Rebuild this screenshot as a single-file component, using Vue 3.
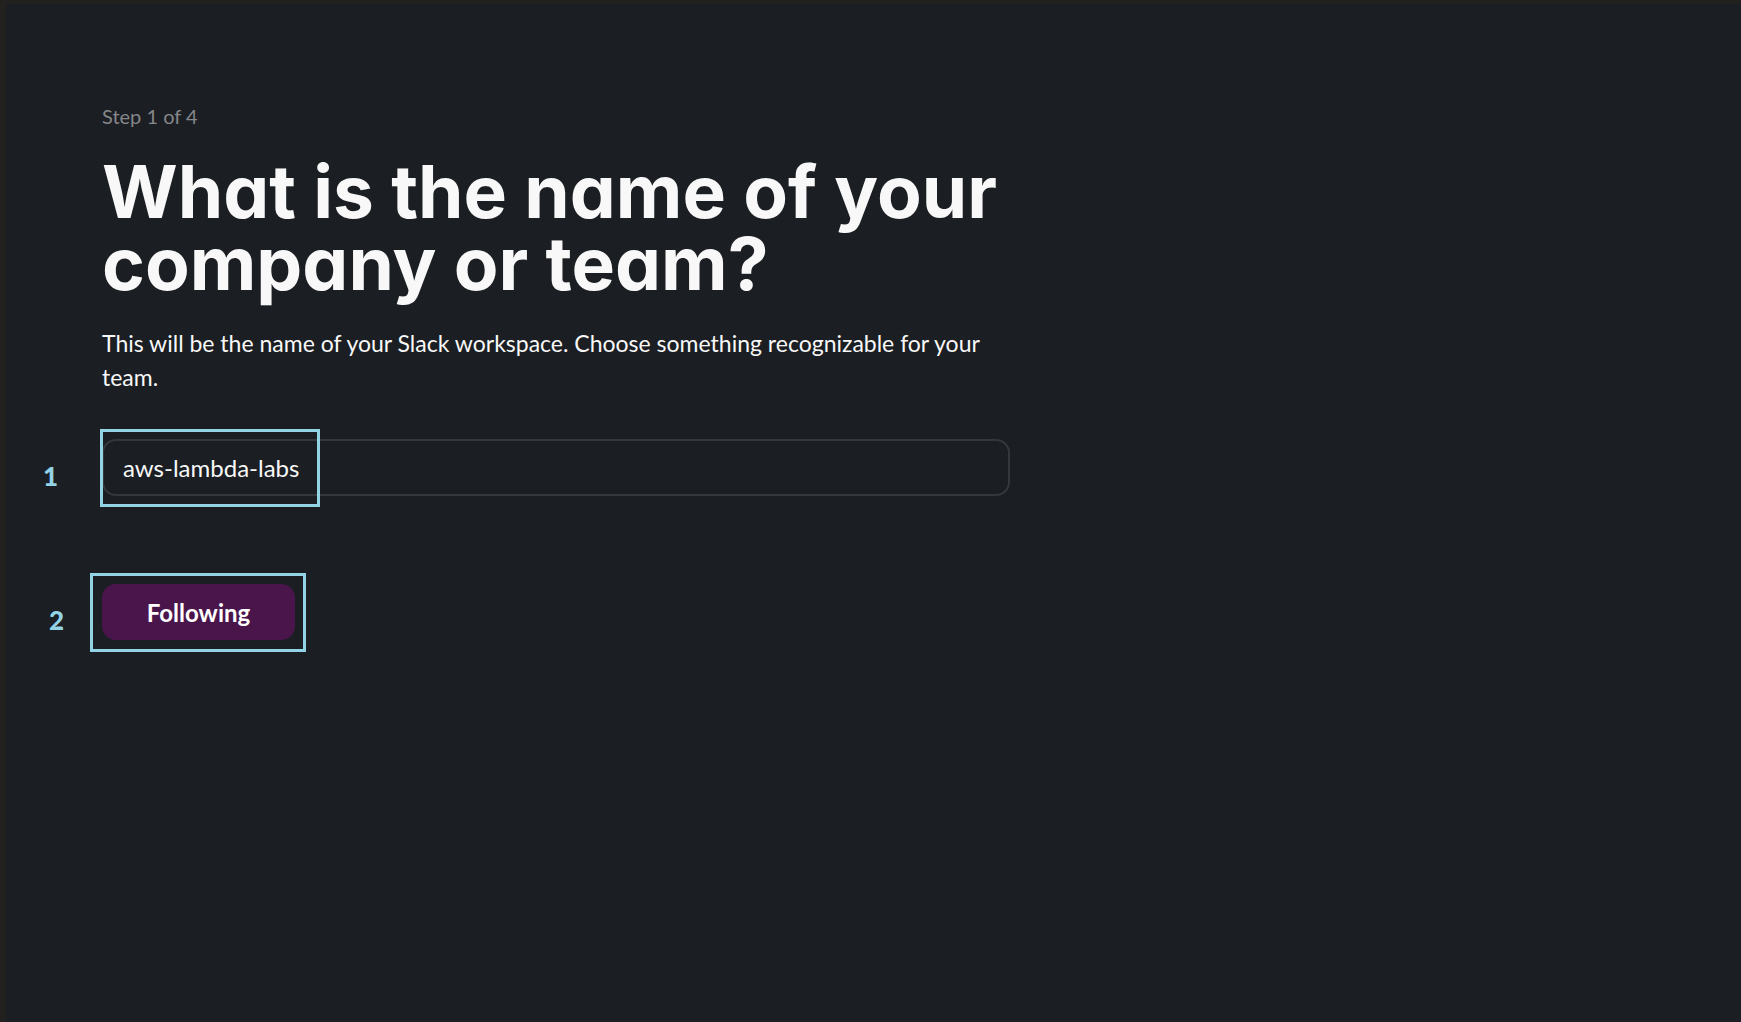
<script setup>
import { ref } from 'vue'

const teamName = ref('aws-lambda-labs')
</script>

<template>
  <main class="page">
    <form class="setup" @submit.prevent>
      <p class="step">Step 1 of 4</p>
      <h1 class="title">What is the name of your company or team?</h1>
      <p class="hint" id="team-hint">
        This will be the name of your Slack workspace. Choose something recognizable for your team.
      </p>
      <div class="field">
        <input
          v-model="teamName"
          class="input"
          type="text"
          aria-label="Company or team name"
          aria-describedby="team-hint"
        />
        <span class="marker marker-input"></span>
        <span class="number number-input">1</span>
      </div>
      <div class="action">
        <button class="submit" type="submit">Following</button>
        <span class="marker marker-button"></span>
        <span class="number number-button">2</span>
      </div>
    </form>
  </main>
</template>

<style>
body {
  margin: 0;
  background: #1b1e22;
}
</style>

<style scoped>
.page {
  box-sizing: border-box;
  min-height: 100vh;
  padding: 98px 96px 96px;
  border-top: 4px solid #222120;
  border-left: 6px solid #222120;
  background: #1b1e22;
  color: #f8f8f8;
  font-family: Lato, "Liberation Sans", sans-serif;
}

.setup {
  max-width: 908px;
}

.step {
  margin: 0;
  color: #85878a;
  font-size: 20px;
  line-height: 28px;
}

.title {
  margin: 26px 0;
  font-family: Inter, "Liberation Sans", sans-serif;
  font-feature-settings: "cv11";
  font-size: 73px;
  font-weight: 700;
  line-height: 72px;
}

.hint {
  margin: 0;
  font-size: 23px;
  line-height: 34px;
}

.field {
  position: relative;
  margin-top: 45px;
}

.input {
  display: block;
  box-sizing: border-box;
  width: 100%;
  height: 57px;
  padding: 0 19px;
  border: 2px solid #35373b;
  border-radius: 14px;
  outline: none;
  background: transparent;
  color: #f8f8f8;
  font: 400 24px Lato, "Liberation Sans", sans-serif;
}

.action {
  position: relative;
  width: 193px;
  margin-top: 88px;
}

.submit {
  display: block;
  width: 100%;
  height: 56px;
  padding: 0;
  border: 0;
  border-radius: 14px;
  background: #4a154b;
  color: #ffffff;
  font: 700 24px Lato, "Liberation Sans", sans-serif;
}

.marker {
  position: absolute;
  box-sizing: border-box;
  border: 3px solid #92d3e6;
  pointer-events: none;
}

.marker-input {
  top: -10px;
  left: -2px;
  width: 220px;
  height: 78px;
}

.marker-button {
  top: -11px;
  left: -12px;
  width: 216px;
  height: 79px;
}

.number {
  position: absolute;
  color: #92d3e6;
  font-size: 26px;
  font-weight: 900;
  line-height: 32px;
}

.number-input {
  top: 21px;
  left: -59px;
}

.number-button {
  top: 20px;
  left: -53px;
}
</style>
